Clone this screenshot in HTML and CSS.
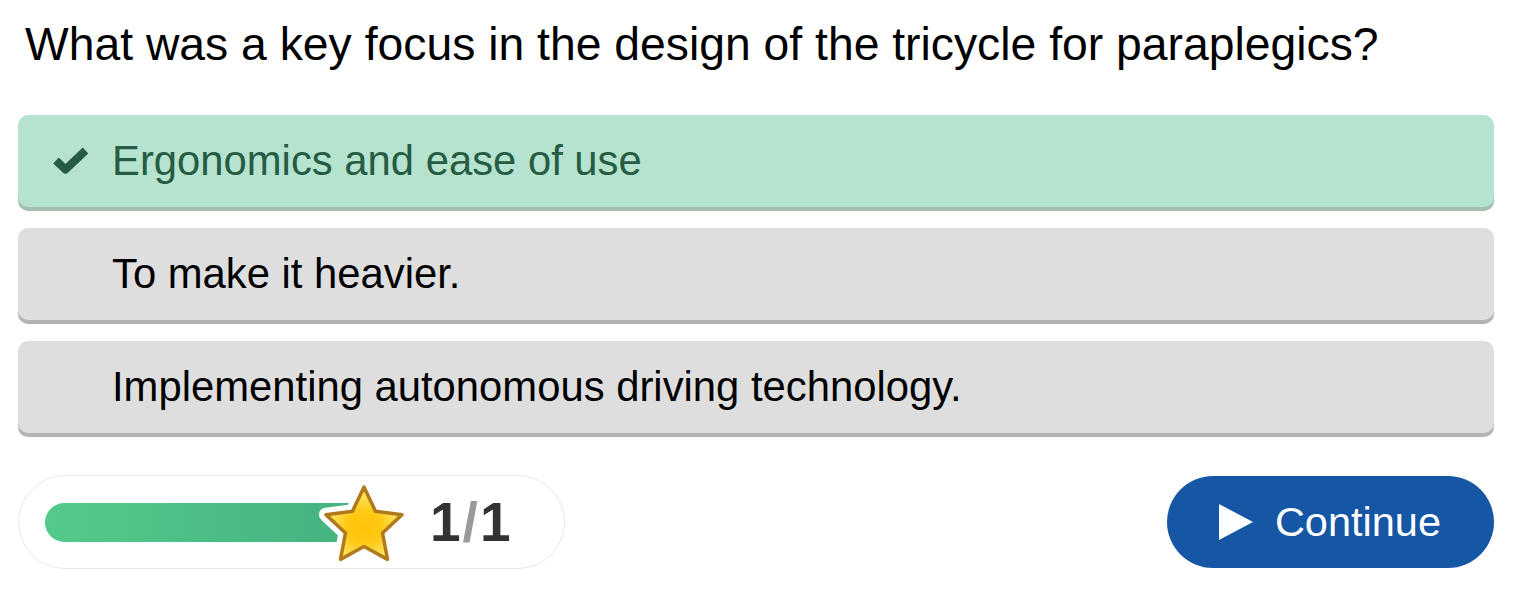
FILE: index.html
```html
<!DOCTYPE html>
<html lang="en">
<head>
<meta charset="utf-8">
<title>Quiz</title>
<link rel="stylesheet" href="styles.css">
</head>
<body>
<div class="quiz">
  <h1 class="question">What was a key focus in the design of the tricycle for paraplegics?</h1>
  <div class="options">
    <div class="option correct">
      <span class="mark">
        <svg width="38" height="28" viewBox="0 0 38 28"><polyline points="4,13.5 13.5,22.5 33.5,3.5" fill="none" stroke="#255c43" stroke-width="8" stroke-linejoin="round"/></svg>
      </span>
      <span class="label">Ergonomics and ease of use</span>
    </div>
    <div class="option">
      <span class="mark"></span>
      <span class="label">To make it heavier.</span>
    </div>
    <div class="option">
      <span class="mark"></span>
      <span class="label">Implementing autonomous driving technology.</span>
    </div>
  </div>
  <div class="footer">
    <div class="progress">
      <div class="track">
        <div class="fill"></div>
        <svg class="star" width="100" height="100" viewBox="0 0 100 100">
          <defs>
            <radialGradient id="sg" cx="50%" cy="56%" r="50%">
              <stop offset="0" stop-color="#ffc20a"/>
              <stop offset="0.45" stop-color="#ffc914"/>
              <stop offset="1" stop-color="#ffe96a"/>
            </radialGradient>
          </defs>
          <path d="M50 12 L61.46 36.22 L88.04 39.64 L68.55 58.03 L73.51 84.36 L50 71.5 L26.49 84.36 L31.45 58.03 L11.96 39.64 L38.54 36.22 Z" fill="#fff" stroke="#fff" stroke-width="14" stroke-linejoin="round"/>
          <path d="M50 12 L61.46 36.22 L88.04 39.64 L68.55 58.03 L73.51 84.36 L50 71.5 L26.49 84.36 L31.45 58.03 L11.96 39.64 L38.54 36.22 Z" fill="url(#sg)" stroke="#b07a1b" stroke-width="3.5" stroke-linejoin="round"/>
        </svg>
      </div>
      <div class="score"><span class="num">1</span><span class="slash">/</span><span class="num">1</span></div>
    </div>
    <button class="continue">
      <svg width="34" height="36" viewBox="0 0 34 36"><polygon points="0,0 34,18 0,36" fill="#fff"/></svg>
      <span>Continue</span>
    </button>
  </div>
</div>
</body>
</html>
```

FILE: styles.css
```css
* { box-sizing: border-box; }
html, body { margin: 0; padding: 0; background: #fff; }
body { font-family: "Liberation Sans", Arial, sans-serif; }

.quiz {
  padding: 18px 23px 0 18px;
}

.question {
  margin: 0 0 44px 7px;
  font-size: 46.3px;
  font-weight: normal;
  line-height: 53px;
  color: #000;
}

.options {
  display: flex;
  flex-direction: column;
  gap: 21px;
}

.option {
  display: flex;
  align-items: center;
  gap: 22px;
  height: 92px;
  padding-left: 34px;
  background: #dedede;
  border-radius: 10px;
  box-shadow: 0 4px 0 #b3b3b3;
  font-size: 41.8px;
  color: #000;
}

.option.correct {
  background: #b5e3cf;
  box-shadow: 0 4px 0 #a3bfb1;
  color: #255c43;
}

.mark {
  width: 38px;
  height: 28px;
  flex: none;
  display: flex;
}

.footer {
  margin-top: 42px;
  display: flex;
  justify-content: space-between;
  align-items: center;
}

.progress {
  width: 547px;
  height: 94px;
  border: 1px solid #e8e8e8;
  border-radius: 47px;
  display: flex;
  align-items: center;
  padding-left: 26px;
}

.track {
  position: relative;
  width: 320px;
  height: 39px;
}

.fill {
  width: 100%;
  height: 100%;
  border-radius: 20px 0 0 20px;
  background: linear-gradient(90deg, #53ca8c, #45b17f);
}

.star {
  position: absolute;
  left: 269px;
  top: -28px;
}

.score {
  margin-left: 65px;
  font-size: 55px;
  font-weight: bold;
  color: #333;
  line-height: 1;
}

.slash {
  color: #9a9a9a;
  margin: 0 2px;
}

.continue {
  display: flex;
  align-items: center;
  gap: 22px;
  height: 92px;
  padding: 0 53px 0 52px;
  border: none;
  border-radius: 46px;
  background: #1557a4;
  color: #fff;
  font-family: "Liberation Sans", Arial, sans-serif;
  font-size: 41.5px;
  cursor: pointer;
}
```
